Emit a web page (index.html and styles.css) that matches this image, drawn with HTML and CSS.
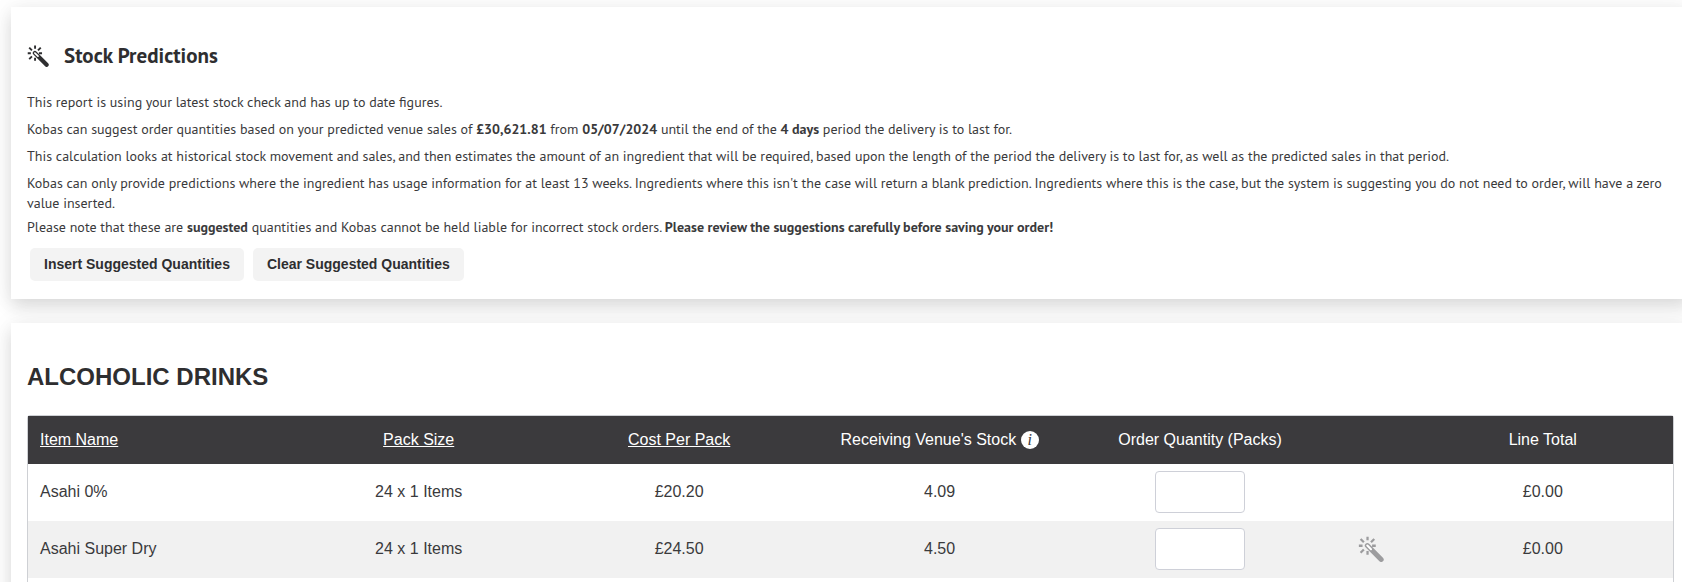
FILE: index.html
```
<!DOCTYPE html>
<html lang="en">
  <head>
    <meta charset="utf-8">
    <title>Stock Order</title>
    <link rel="stylesheet" href="styles.css">
  </head>
  <body>
    <svg class="icon-defs" width="0" height="0" aria-hidden="true">
      <symbol id="wand" viewBox="0 0 24 24">
        <g fill="none" stroke="currentColor" stroke-width="2.1">
          <path d="M8.8 0.6v3.4M8.8 13.8v3.4M0.8 9h3.4M13 9h3.4M2.4 2.8l3 3M15 2.8l-3 3M2.4 15.4l3-3"/>
        </g>
        <path d="M8.6 8.8L21.4 21.6" fill="none" stroke="currentColor" stroke-width="4.6" stroke-linecap="round"/>
        <path class="wand-tip" d="M8.6 8.8l3.4 3.4" fill="none" stroke-width="1.9" stroke-linecap="round"/>
      </symbol>
    </svg>

    <div class="card predictions">
      <h2><svg class="wand-dark" width="22" height="22"><use href="#wand"/></svg>Stock Predictions</h2>
      <p>This report is using your latest stock check and has up to date figures.</p>
      <p>Kobas can suggest order quantities based on your predicted venue sales of <b>£30,621.81</b> from <b>05/07/2024</b> until the end of the <b>4 days</b> period the delivery is to last for.</p>
      <p>This calculation looks at historical stock movement and sales, and then estimates the amount of an ingredient that will be required, based upon the length of the period the delivery is to last for, as well as the predicted sales in that period.</p>
      <p class="tight">Kobas can only provide predictions where the ingredient has usage information for at least 13 weeks. Ingredients where this isn't the case will return a blank prediction. Ingredients where this is the case, but the system is suggesting you do not need to order, will have a zero value inserted.</p>
      <p class="tight">Please note that these are <b>suggested</b> quantities and Kobas cannot be held liable for incorrect stock orders. <b>Please review the suggestions carefully before saving your order!</b></p>
      <div class="buttons">
        <button type="button">Insert Suggested Quantities</button>
        <button type="button">Clear Suggested Quantities</button>
      </div>
    </div>

    <div class="card stock">
      <h1>ALCOHOLIC DRINKS</h1>
      <div class="table-box">
        <table>
          <thead>
            <tr>
              <th class="name"><a href="#">Item Name</a></th>
              <th><a href="#">Pack Size</a></th>
              <th><a href="#">Cost Per Pack</a></th>
              <th>Receiving Venue's Stock <span class="info">i</span></th>
              <th>Order Quantity (Packs)</th>
              <th class="suggest"></th>
              <th>Line Total</th>
            </tr>
          </thead>
          <tbody>
            <tr>
              <td class="name">Asahi 0%</td>
              <td>24 x 1 Items</td>
              <td>£20.20</td>
              <td>4.09</td>
              <td><input type="text" aria-label="Order quantity for Asahi 0%"></td>
              <td></td>
              <td>£0.00</td>
            </tr>
            <tr>
              <td class="name">Asahi Super Dry</td>
              <td>24 x 1 Items</td>
              <td>£24.50</td>
              <td>4.50</td>
              <td><input type="text" aria-label="Order quantity for Asahi Super Dry"></td>
              <td><svg class="wand-grey" width="26" height="26"><use href="#wand"/></svg></td>
              <td>£0.00</td>
            </tr>
            <tr>
              <td colspan="7"></td>
            </tr>
          </tbody>
        </table>
      </div>
    </div>
  </body>
</html>
```
FILE: styles.css
```
* {
  box-sizing: border-box;
}

html {
  overflow: hidden;
}

body {
  margin: 0;
  padding: 7px 0 0 11px;
  background-color: #fff;
  color: #3a3a3c;
  font-family: "Liberation Sans", Arial, sans-serif;
  font-size: 16px;
}

.icon-defs {
  display: none;
}

.card {
  margin: 0 -8px 24px 0;
  padding: 0 16px;
  background-color: #fff;
  box-shadow: 0 8px 16px rgba(0, 0, 0, 0.12), 0 0 24px rgba(0, 0, 0, 0.06);
}

.predictions {
  padding-top: 35px;
  padding-bottom: 18px;
  font-family: "PT Sans", "Open Sans", sans-serif;
}

h2 {
  display: flex;
  align-items: center;
  gap: 15px;
  margin: 0 0 22px;
  font-size: 21px;
  line-height: 28px;
  color: #2e2e30;
}

.wand-dark {
  color: #2e2e30;
}

.wand-tip {
  stroke: #fff;
}

p {
  margin: 0 0 7px;
  font-size: 14px;
  line-height: 20px;
}

p.tight {
  margin-bottom: 4px;
}

.buttons {
  display: flex;
  gap: 9px;
  padding: 7px 3px 0;
}

button {
  height: 33px;
  padding: 0 14px 2px;
  border: none;
  border-radius: 5px;
  background-color: #f3f3f3;
  color: #2e2e30;
  font-family: "Liberation Sans", Arial, sans-serif;
  font-size: 14px;
  font-weight: bold;
  cursor: pointer;
}

.stock {
  padding-top: 40px;
}

h1 {
  margin: 0 0 24px;
  font-size: 24px;
  line-height: 28px;
  color: #2e2e30;
}

.table-box {
  border: 1px solid #ced0d4;
  border-radius: 3px;
}

table {
  width: 100%;
  table-layout: fixed;
  border-collapse: collapse;
}

th {
  height: 48px;
  padding: 0;
  background-color: #3b3a3d;
  color: #fff;
  font-weight: normal;
  white-space: nowrap;
}

th a {
  color: #fff;
}

th.suggest {
  width: 5%;
}

td {
  height: 57px;
  padding: 0 0 2px;
  text-align: center;
}

th.name,
td.name {
  padding-left: 12px;
  text-align: left;
}

tbody tr:nth-child(even) {
  background-color: #f1f1f1;
}

td input {
  display: block;
  width: 90px;
  height: 42px;
  margin: 0 auto;
  padding: 0 10px;
  border: 1px solid #ced0d8;
  border-radius: 4px;
  background-color: #fff;
  font-size: 16px;
}

.wand-grey {
  display: block;
  margin: 0 auto;
  color: #9c9c9e;
}

.info {
  display: inline-block;
  width: 18px;
  height: 18px;
  border-radius: 50%;
  background-color: #fff;
  color: #3b3a3d;
  font-family: "Liberation Serif", serif;
  font-size: 16px;
  font-style: italic;
  line-height: 18px;
  text-align: center;
}
```
